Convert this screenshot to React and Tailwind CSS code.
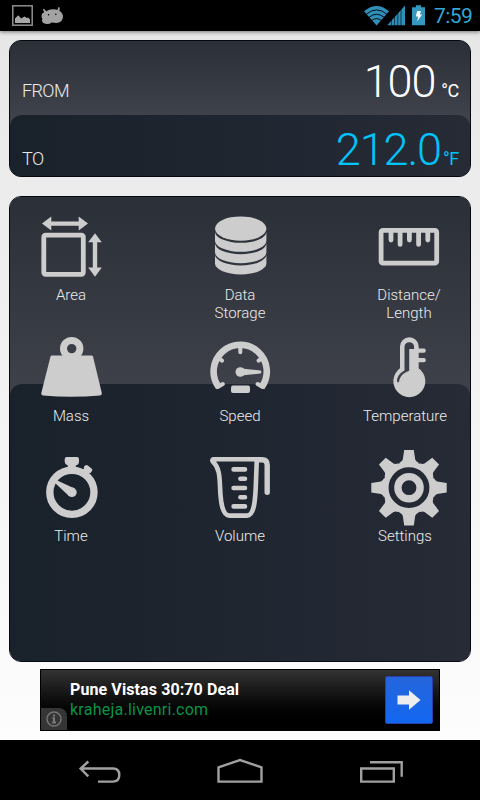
import React from 'react'

const AreaIcon = () => (
  <svg className="w-[76px] h-[76px]" viewBox="33 209 76 76" fill="#cdcdcd">
    <rect x="43.8" y="235.1" width="39.5" height="39.2" rx="1.8" fill="none" stroke="#cdcdcd" strokeWidth="4.8" />
    <path d="M42 223.6l9.3-7v4.9h27.4v-4.9l9.3 7-9.3 7v-4.9H51.3v4.9z" />
    <path d="M95 233.2l6.8 9.1h-4.6v25.2h4.6L95 276.8l-6.8-9.3h4.6v-25.2h-4.6z" />
  </svg>
)

const StorageIcon = () => (
  <svg className="w-[76px] h-[76px]" viewBox="202 209 76 76" fill="#cdcdcd">
    <ellipse cx="240.7" cy="228.6" rx="25.7" ry="12.2" />
    {[0, 11.4, 22.6].map(dy => (
      <path
        key={dy}
        transform={`translate(0 ${dy})`}
        d="M215 231.8A25.7 11 0 0 0 266.4 231.8V240.8A25.7 11 0 0 1 215 240.8Z"
      />
    ))}
  </svg>
)

const RulerIcon = () => (
  <svg className="w-[76px] h-[76px]" viewBox="371 209 76 76" fill="none" stroke="#cdcdcd" strokeWidth="4.8">
    <rect x="381.1" y="230.4" width="55.6" height="32.8" rx="1.8" />
    <path strokeLinecap="round" d="M391 232v8M400.1 232v12.4M409.4 232v8M418.6 232v12.4M427.8 232v8" />
  </svg>
)

const MassIcon = () => (
  <svg className="w-[76px] h-[76px]" viewBox="33 330 76 76" fill="#cdcdcd">
    <circle cx="71.7" cy="348.6" r="8.2" fill="none" stroke="#cdcdcd" strokeWidth="7" />
    <path d="M52 355.4H91.5Q92.7 355.4 93 356.5L101.8 393Q102.2 395.2 100 395.6Q86 396.8 71.6 396.8T43 395.6Q40.8 395.2 41.3 393L50.5 356.5Q50.8 355.4 52 355.4Z" />
  </svg>
)

const SpeedIcon = () => (
  <svg className="w-[76px] h-[76px]" viewBox="202 330 76 76" fill="#cdcdcd">
    <path d="M218.8 387.2A26.6 26.6 0 1 1 261.6 387.2" fill="none" stroke="#cdcdcd" strokeWidth="6.6" />
    <path
      d="M240.3 345v7.2M218.8 358.2l3.2 2.4M261.8 358.2l-3.2 2.4M217.8 387l5-3M262.6 387l-5-3"
      fill="none"
      stroke="#cdcdcd"
      strokeWidth="4"
      strokeLinecap="round"
    />
    <circle cx="240.3" cy="372" r="4.8" />
    <path d="M241 368.4L260.5 370.6Q262.4 372 260.5 373.5L241 375.6Z" />
    <rect x="231" y="385.5" width="19" height="7.6" rx="2" />
  </svg>
)

const TemperatureIcon = () => (
  <svg className="w-[76px] h-[76px]" viewBox="371 330 76 76" fill="#cdcdcd">
    <path
      fillRule="evenodd"
      d="M400 346.5A9.35 9.35 0 0 1 418.7 346.5V348.6H424Q425.8 348.6 425.8 350.7T424 352.8H418.7V358.1H424Q425.8 358.1 425.8 360.2T424 362.3H418.7V368.2A16 16 0 1 1 400 368.2ZM404.5 347V370.6C400 373 397 377 397 381Q397.4 383.4 399 381.8C400 376.5 403 373 409.2 370.8V349H414.1V347A4.8 4.8 0 0 0 404.5 347Z"
    />
  </svg>
)

const TimeIcon = () => (
  <svg className="w-[76px] h-[76px]" viewBox="33 450 76 76" fill="#cdcdcd">
    <circle cx="71.9" cy="492.3" r="22.1" fill="none" stroke="#cdcdcd" strokeWidth="7.4" />
    <path d="M66.3 457H77.4Q79 457.4 79 459V462Q78.8 464.8 75.8 465.4V470H67.8V465.4Q65 464.8 64.7 462V459Q64.8 457.4 66.3 457Z" />
    <path d="M81.6 470.8L84.2 468.2Q83.4 467.2 84.3 466.3L85.8 465.2Q86.8 464.6 87.8 465.4L91.8 468.8Q92.8 469.8 92 471L90.9 472.5Q90 473.4 88.8 473L86.6 475.6Z" />
    <circle cx="71.9" cy="492.3" r="4.8" />
    <path d="M69 496L54.5 482.6L56.3 480L74.5 488.4Z" />
  </svg>
)

const VolumeIcon = () => (
  <svg
    className="w-[76px] h-[76px]"
    viewBox="202 450 76 76"
    fill="none"
    stroke="#cdcdcd"
    strokeWidth="4.6"
    strokeLinecap="round"
    strokeLinejoin="round"
  >
    <path d="M256.8 459.3H213Q211.6 460.4 213 461.8C218.8 467 219.6 475 220 486C220.5 501 222 515.6 229.5 515.6H247C254.2 515.6 255.3 500 255.8 486Z" />
    <path strokeWidth="5.4" strokeLinejoin="miter" d="M257 459.7H262Q267.2 459.7 267.2 464.8V492.2" />
    <path d="M233.6 469.4H245M240.4 478.8H245M233.6 488H245M240.4 497.3H245M233.6 506.4H245" />
  </svg>
)

const SettingsIcon = () => (
  <svg className="w-[76px] h-[76px]" viewBox="371 450 76 76" fill="#cdcdcd">
    <circle cx="409" cy="487.7" r="23.3" fill="none" stroke="#cdcdcd" strokeWidth="5.8" />
    <circle cx="409" cy="487.7" r="11.1" fill="none" stroke="#cdcdcd" strokeWidth="7.4" />
    {[0, 45, 90, 135, 180, 225, 270, 315].map(angle => (
      <path
        key={angle}
        transform={`rotate(${angle} 409 487.7)`}
        d="M404.2 450H413.8L415.2 459.6Q415.8 461.6 418.6 462.8L416 466.3H402L399.4 462.8Q402.2 461.6 402.8 459.6Z"
      />
    ))}
  </svg>
)

const units = [
  { label: 'Area', Icon: AreaIcon },
  { label: 'Data Storage', Icon: StorageIcon },
  { label: 'Distance/ Length', Icon: RulerIcon },
  { label: 'Mass', Icon: MassIcon },
  { label: 'Speed', Icon: SpeedIcon },
  { label: 'Temperature', Icon: TemperatureIcon, shifted: true },
  { label: 'Time', Icon: TimeIcon },
  { label: 'Volume', Icon: VolumeIcon },
  { label: 'Settings', Icon: SettingsIcon, shifted: true }
]

const StatusBar = () => (
  <header className="h-[31px] shrink-0 bg-black flex items-center justify-between pl-3 pr-2 shadow-[0_1px_4px_rgba(0,0,0,0.5)]">
    <div className="flex items-center gap-2">
      <svg className="w-[21px] h-[21px]" viewBox="12 5 21 21">
        <rect x="12.8" y="5.8" width="19.4" height="19.4" fill="none" stroke="#8f8f8f" strokeWidth="1.5" />
        <path fill="#a8a8a8" d="M15 23V18.5L18.2 15.2L21.2 18.4L24.4 16.4L27 18L28.2 17.6L30 19.4V23Z" />
      </svg>
      <svg className="w-[23px] h-[21px]" viewBox="41 5 23 21" fill="#a3a3a3">
        <path d="M44.3 12.2L42.8 9.4L44 8.8L46.2 11.2Q49 9 53.5 9.2Q56 9.2 57.4 10L58.2 7.2L59.8 7.6L59.4 11Q63 13 63 16.6Q62.8 20.6 59.6 22.2Q57 23.4 54.5 22.8Q53 22.4 51.4 22.4Q50 24.2 46.5 24Q42.4 23.8 42 20.6Q42 19.6 42.4 19Q41 17 41.8 14.2Q42.6 12.8 44.3 12.2Z" />
        <circle cx="48.6" cy="14.8" r="0.8" fill="#000" />
        <circle cx="55.8" cy="14.2" r="0.8" fill="#000" />
      </svg>
    </div>
    <div className="flex items-center">
      <svg className="w-[62px] h-[21px]" viewBox="364 5 62 21">
        <path fill="#2f8fb8" d="M364 11.3Q376.6 0.8 389 11.3L376.6 25.4Z" />
        <path
          fill="none"
          stroke="#000"
          strokeWidth="0.9"
          d="M366.3 14.2Q376.6 5.6 386.8 14.2M369 17.3Q376.6 11.2 384.2 17.3M371.8 20.4Q376.6 16.8 381.4 20.4"
        />
        <path fill="#2f8fb8" d="M387.3 25.2L405 5.4V25.2Z" />
        <path stroke="#000" strokeWidth="0.6" d="M391.4 5V26M394.6 5V26M397.8 5V26M401 5V26" />
        <path fill="#3498bf" d="M416 5.2H421V7.2H425V25.2H412V7.2H416Z" />
        <path fill="#fff" d="M417.2 11H421L419.8 14.4H422L417.2 21.4L418.2 16.6H415.8Z" />
      </svg>
      <span className="ml-2 pt-0.5 w-[38px] text-[21px] leading-[29px] tracking-[-0.6px] text-[#33a6d4] whitespace-nowrap">7:59</span>
    </div>
  </header>
)

const Converter = () => (
  <section className="h-[137px] shrink-0 rounded-xl border border-[#05080f] bg-[#3d4049] overflow-hidden flex flex-col">
    <div className="h-[86px] shrink-0 pl-3 pr-[11px] bg-gradient-to-b from-[#2b2f38] to-[#42454e] flex items-baseline text-[#ececec]">
      <span className="text-[18px] leading-[74px] tracking-[-0.6px] font-light">FROM</span>
      <span className="ml-auto text-[45px] leading-[81px] tracking-[-1.2px] font-light text-white">100</span>
      <span className="ml-[6px] text-[18px] tracking-[-0.3px] text-white">°C</span>
    </div>
    <div className="-mt-3 h-[61px] shrink-0 pl-3 pr-[11px] rounded-t-xl bg-gradient-to-r from-[#19212b] to-[#262b36] flex items-baseline text-[#ececec]">
      <span className="text-[18px] tracking-[-0.6px] font-light">TO</span>
      <span className="ml-auto text-[45px] leading-[70px] tracking-[-1.1px] font-light text-[#00c4fa]">212.0</span>
      <span className="ml-[2px] text-[18px] tracking-[-0.3px] text-[#00c4fa]">°F</span>
    </div>
  </section>
)

const UnitGrid = () => (
  <section className="mt-[19px] h-[466px] shrink-0 rounded-xl border border-[#05080f] overflow-hidden grid">
    <div className="col-start-1 row-start-1 bg-[#3d4049] flex flex-col">
      <div className="h-[199px] shrink-0 bg-gradient-to-b from-[#2b2f38] to-[#3f424a]" />
      <div className="-mt-3 flex-1 rounded-t-xl bg-gradient-to-r from-[#19212b] to-[#262b36]" />
    </div>
    <div className="col-start-1 row-start-1 pt-3 pl-[23px] pr-[23px] grid grid-cols-[76px_76px_76px] auto-rows-[120.5px] justify-between content-start">
      {units.map(({ label, Icon, shifted }) => (
        <div key={label} className="flex flex-col items-center">
          <Icon />
          <span
            className={`mt-[2px] w-[90px] shrink-0 text-center text-[15px] leading-[17.5px] font-light text-[#ececec] ${shifted ? '-ml-2' : ''} ${
              label.includes(' ') ? 'px-3' : ''
            }`}
          >
            {label}
          </span>
        </div>
      ))}
    </div>
  </section>
)

const AdBanner = () => (
  <aside className="mt-[7px] mx-auto w-[400px] h-[62px] shrink-0 border border-black bg-gradient-to-b from-[#333333] to-black flex">
    <div className="self-end w-[26px] h-[22px] rounded-tr-lg bg-[#353535] flex items-center justify-center">
      <svg className="w-4 h-4" viewBox="0 0 16 16" fill="none" stroke="#777">
        <circle cx="8" cy="8" r="7" strokeWidth="1.4" />
        <path strokeWidth="2" d="M8 3.4v2M6.4 7.2H8v4.2M6 11.6h4" />
      </svg>
    </div>
    <div className="pl-[3px] pt-[10px] whitespace-nowrap">
      <p className="text-[16px] leading-5 tracking-[0.1px] font-bold text-white">Pune Vistas 30:70 Deal</p>
      <p className="text-[16px] leading-5 tracking-[0.24px] text-[#0a9447]">kraheja.livenri.com</p>
    </div>
    <div className="ml-auto mt-1.5 mr-1.5 w-12 h-12 rounded-[2px] border border-[#2a3fa8] bg-gradient-to-b from-[#2465dc] to-[#1167f0] flex items-center justify-center">
      <svg className="w-6 h-6" viewBox="0 0 24 24" fill="#eee">
        <path d="M0.5 7.6H12V2.2L23.5 12L12 21.8V16.4H0.5Z" />
      </svg>
    </div>
  </aside>
)

const NavBar = () => (
  <nav className="mt-auto h-[60px] shrink-0 bg-black">
    <svg className="w-full h-full" viewBox="0 740 480 60" fill="none" stroke="#a0a0a0" strokeWidth="2.4">
      <path d="M88.3 761.5L80.6 768.5L88.3 776.3M81 768.5H113Q119.3 768.5 119.3 775T113 781.6H98" />
      <path d="M218.5 781.6V767.4L240 760L261.5 767.4V781.6Z" />
      <path d="M361.2 768.5H393.8V781.6H361.2ZM370 762.2H401.7V776.8" />
    </svg>
  </nav>
)

const App = () => {
  return (
    <div className="w-[480px] h-[800px] overflow-hidden flex flex-col bg-gradient-to-b from-[#e6e6e6] to-white font-['Roboto',sans-serif]">
      <StatusBar />
      <main className="pt-[9px] px-[9px] flex flex-col">
        <Converter />
        <UnitGrid />
        <AdBanner />
      </main>
      <NavBar />
    </div>
  )
}

export default App
